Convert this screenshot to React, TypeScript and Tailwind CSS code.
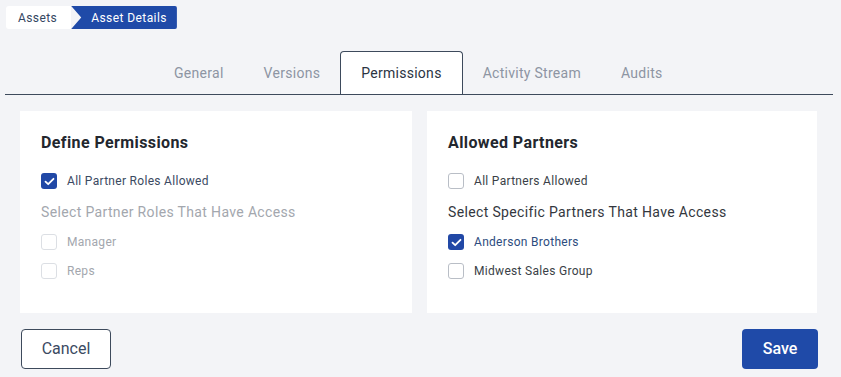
import React from "react";

const font = { fontFamily: "Roboto, 'Liberation Sans', sans-serif" };

function Box({ checked, disabled }: { checked?: boolean; disabled?: boolean }) {
  if (checked) {
    return (
      <span className="flex h-4 w-4 shrink-0 items-center justify-center rounded-[3px] bg-[#2148a6]">
        <svg width="11" height="9" viewBox="0 0 11 9" fill="none">
          <path d="M1.5 4.6 4.2 7.2 9.5 1.8" stroke="white" strokeWidth="1.8" strokeLinecap="round" strokeLinejoin="round" />
        </svg>
      </span>
    );
  }
  return (
    <span
      className={`h-4 w-4 shrink-0 rounded-[3px] border bg-white ${
        disabled ? "border-[#dcdfe4]" : "border-[#b9bec6]"
      }`}
    />
  );
}

function Row({ label, checked, disabled, blue }: { label: string; checked?: boolean; disabled?: boolean; blue?: boolean }) {
  return (
    <div className="flex h-4 items-center gap-[10px]">
      <Box checked={checked} disabled={disabled} />
      <span
        className={`text-[12px] tracking-[0.025em] ${
          disabled ? "text-[#a3a7ae]" : blue ? "text-[#2d4c7e]" : checked ? "text-[#3b4a62]" : "text-[#3a3f47]"
        }`}
      >
        {label}
      </span>
    </div>
  );
}

export default function App() {
  const tabs = ["General", "Versions", "Permissions", "Activity Stream", "Audits"];
  return (
    <div className="h-[377px] w-[841px] overflow-hidden bg-[#f3f4f7]" style={font}>
      {/* breadcrumb */}
      <div className="flex pl-[6px] pt-[6px]">
        <div className="flex h-[23px] items-center rounded-l-[3px] bg-white pl-[12px] pr-[14px] text-[12px] tracking-[0.035em] text-[#34465f]">
          Assets
        </div>
        <div className="flex h-[23px] items-center rounded-r-[2px] bg-[#1f4aa8] pl-[20px] pr-[10px] text-[12px] tracking-[0.035em] text-white [clip-path:polygon(0_0,100%_0,100%_100%,0_100%,10px_50%)]">
          Asset Details
        </div>
      </div>

      {/* tabs */}
      <div className="mx-[5px] mr-[8px] mt-[22px] flex border-b-[1.5px] border-[#3d4a5c] pl-[149px]">
        {tabs.map((t) =>
          t === "Permissions" ? (
            <div
              key={t}
              className="relative -mb-[1.5px] flex h-[43px] items-center rounded-t-[4px] border-[1.5px] border-b-0 border-[#3d4a5c] bg-white px-[20px] pt-[1px] text-[14px] tracking-[0.02em] text-[#2b3442]"
            >
              {t}
            </div>
          ) : (
            <div key={t} className="flex h-[43px] items-center px-[20px] pt-[1px] text-[14px] tracking-[0.02em] text-[#8d95a3]">
              {t}
            </div>
          )
        )}
      </div>

      {/* panels */}
      <div className="mt-[16px] flex gap-[15px] pl-[20px] pr-[24px]">
        <div className="h-[202px] w-[392px] bg-white px-[21px] pt-[23px]">
          <h2 className="text-[16px] font-bold leading-[18px] tracking-[0.025em] text-[#23272e]">Define Permissions</h2>
          <div className="mt-[21px]">
            <Row label="All Partner Roles Allowed" checked />
          </div>
          <p className="mt-[14px] text-[14px] leading-[18px] tracking-[0.025em] text-[#a3a7ae]">Select Partner Roles That Have Access</p>
          <div className="mt-[13px] flex flex-col gap-[13px]">
            <Row label="Manager" disabled />
            <Row label="Reps" disabled />
          </div>
        </div>
        <div className="h-[202px] w-[390px] bg-white px-[21px] pt-[23px]">
          <h2 className="text-[16px] font-bold leading-[18px] tracking-[0.025em] text-[#23272e]">Allowed Partners</h2>
          <div className="mt-[21px]">
            <Row label="All Partners Allowed" />
          </div>
          <p className="mt-[14px] text-[14px] leading-[18px] tracking-[0.025em] text-[#33373e]">Select Specific Partners That Have Access</p>
          <div className="mt-[13px] flex flex-col gap-[13px]">
            <Row label="Anderson Brothers" checked blue />
            <Row label="Midwest Sales Group" />
          </div>
        </div>
      </div>

      {/* actions */}
      <div className="mt-[16px] flex justify-between pl-[21px] pr-[23px]">
        <button className="h-[40px] w-[90px] rounded-[4px] border border-[#3d4a5c] bg-white text-[16px] text-[#3b4a62]">
          Cancel
        </button>
        <button className="h-[40px] w-[76px] rounded-[4px] bg-[#1f4aa8] text-[16px] font-medium text-white">
          Save
        </button>
      </div>
    </div>
  );
}
